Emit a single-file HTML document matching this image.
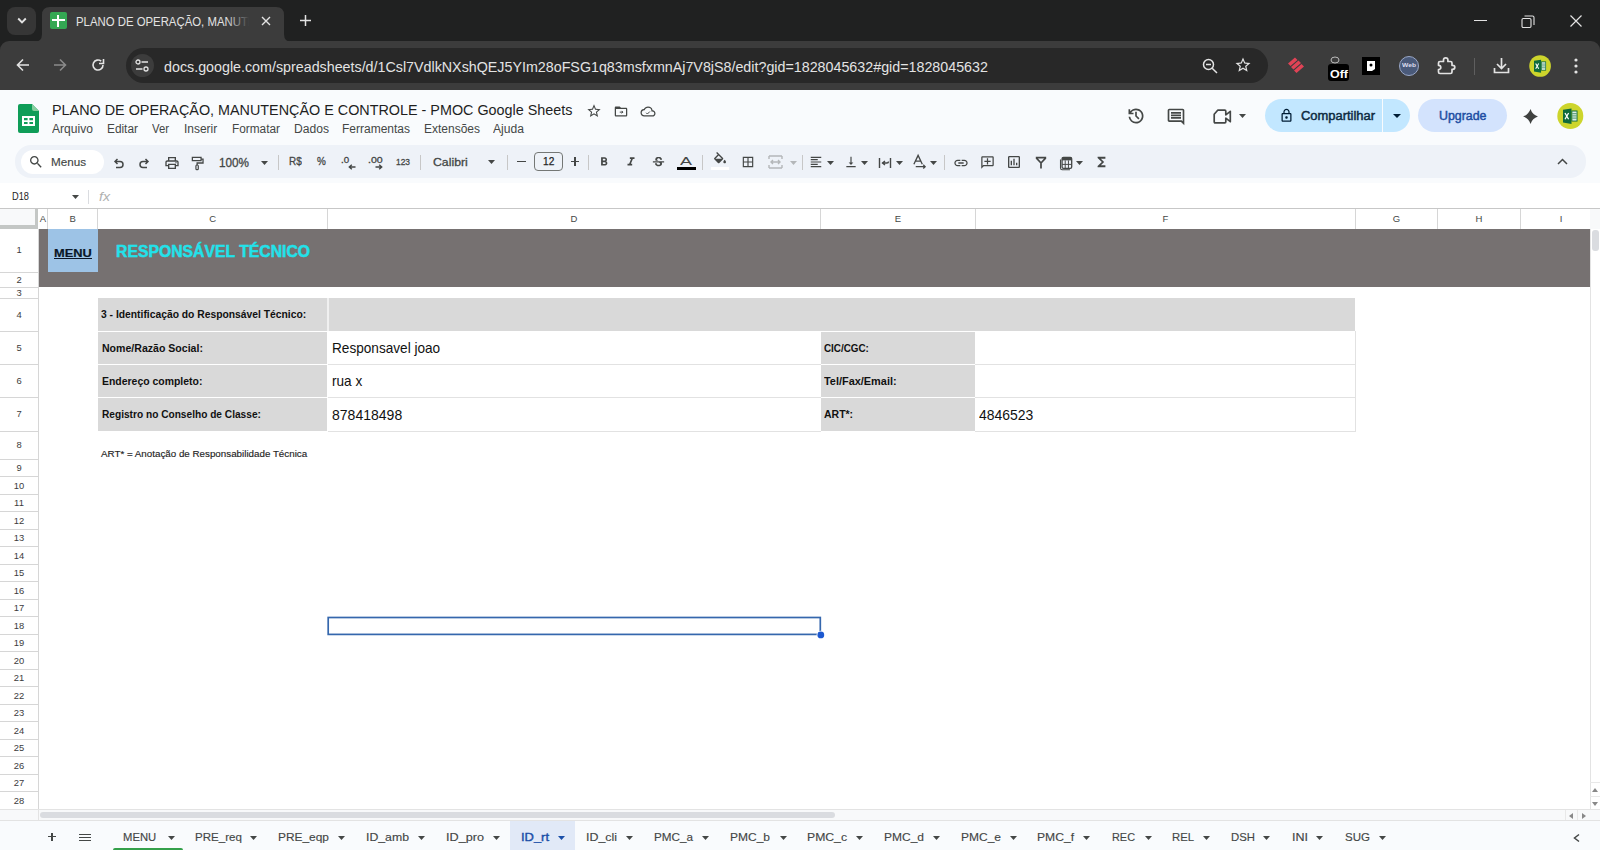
<!DOCTYPE html>
<html><head><meta charset="utf-8"><style>
html,body{margin:0;padding:0;width:1600px;height:850px;overflow:hidden;background:#fff;}
body{position:relative;font-family:"Liberation Sans",sans-serif;}
.t{position:absolute;white-space:pre;line-height:normal;transform-origin:0 0;}
.r{position:absolute;}
.i{position:absolute;overflow:visible;}
</style></head><body>
<div class="r" style="left:0px;top:0px;width:1600px;height:52px;background:#202121;"></div>
<div class="r" style="left:0px;top:41px;width:1600px;height:49px;background:#3c3c3c;border-radius:9px 9px 0 0;"></div>
<div class="r" style="left:7px;top:7px;width:29px;height:28px;background:#363636;border-radius:8px;"></div>
<svg class="i" style="left:17px;top:17px;" width="10" height="8" viewBox="0 0 10 8"><path d="M1.2 1.5L5 5.3L8.8 1.5" fill="none" stroke="#e3e3e3" stroke-width="1.9"/></svg>
<svg class="i" style="left:34px;top:7px" width="260" height="35" viewBox="0 0 260 35"><path d="M0 35 Q8 35 8 27 L8 8 Q8 0 16 0 L242 0 Q250 0 250 8 L250 27 Q250 35 258 35 Z" fill="#3c3c3c"/></svg>
<div class="r" style="left:50px;top:12px;width:17px;height:17px;background:#34a853;border-radius:2px;"></div>
<div class="r" style="left:57px;top:15px;width:2px;height:12px;background:#fff;"></div>
<div class="r" style="left:52px;top:19px;width:13px;height:2px;background:#fff;"></div>
<div class="t" style="left:76.00px;top:14.05px;font-size:13.20px;color:#e3e3e3;transform:scaleX(0.8621);">PLANO DE OPERAÇÃO, MANUTE</div>
<div class="r" style="left:226px;top:10px;width:26px;height:22px;background:linear-gradient(90deg,rgba(60,60,60,0),#3c3c3c 90%);"></div>
<div class="r" style="left:252px;top:10px;width:30px;height:22px;background:#3c3c3c;"></div>
<svg class="i" style="left:261px;top:16px;" width="10" height="10" viewBox="0 0 10 10"><path d="M1 1L9 9M9 1L1 9" stroke="#e3e3e3" stroke-width="1.4"/></svg>
<svg class="i" style="left:300px;top:15px;" width="11" height="11" viewBox="0 0 11 11"><path d="M5.5 0V11M0 5.5H11" stroke="#e3e3e3" stroke-width="1.5"/></svg>
<div class="r" style="left:1474px;top:20px;width:13px;height:1px;background:#e3e3e3;"></div>
<svg class="i" style="left:1521px;top:15px;" width="14" height="13" viewBox="0 0 14 13"><rect x="1" y="3.5" width="9" height="9" rx="1.2" fill="none" stroke="#e3e3e3" stroke-width="1.1"/><path d="M3.5 1H11.5Q13 1 13 2.5V10" fill="none" stroke="#e3e3e3" stroke-width="1.1"/></svg>
<svg class="i" style="left:1570px;top:15px;" width="12" height="12" viewBox="0 0 12 12"><path d="M0.5 0.5L11.5 11.5M11.5 0.5L0.5 11.5" stroke="#e3e3e3" stroke-width="1.2"/></svg>
<svg class="i" style="left:16px;top:58px;" width="14" height="14" viewBox="0 0 14 14"><path d="M13 7H2M7 1.5L1.5 7L7 12.5" fill="none" stroke="#e3e3e3" stroke-width="1.6"/></svg>
<svg class="i" style="left:53px;top:58px;" width="14" height="14" viewBox="0 0 14 14"><path d="M1 7H12M7 1.5L12.5 7L7 12.5" fill="none" stroke="#8a8a8a" stroke-width="1.6"/></svg>
<svg class="i" style="left:91px;top:58px;" width="14" height="14" viewBox="0 0 14 14"><path d="M12 7A5 5 0 1 1 10.2 3.2" fill="none" stroke="#e3e3e3" stroke-width="1.6"/><path d="M12.5 1V5.5H8" fill="none" stroke="#e3e3e3" stroke-width="1.6"/></svg>
<div class="r" style="left:126px;top:48px;width:1142px;height:35px;background:#282828;border-radius:18px;"></div>
<div class="r" style="left:131px;top:54px;width:23px;height:23px;background:#3c3c3c;border-radius:50%;"></div>
<svg class="i" style="left:135px;top:59px;" width="14" height="13" viewBox="0 0 14 13"><circle cx="3" cy="3" r="2" fill="none" stroke="#e3e3e3" stroke-width="1.3"/><path d="M6.5 3H13M1 10H7.5" stroke="#e3e3e3" stroke-width="1.3"/><circle cx="11" cy="10" r="2" fill="none" stroke="#e3e3e3" stroke-width="1.3"/></svg>
<div class="t" style="left:164.00px;top:57.97px;font-size:15.50px;color:#e3e3e3;transform:scaleX(0.9212);">docs.google.com/spreadsheets/d/1Csl7VdlkNXshQEJ5YIm28oFSG1q83msfxmnAj7V8jS8/edit?gid=1828045632#gid=1828045632</div>
<svg class="i" style="left:1202px;top:58px;" width="16" height="16" viewBox="0 0 16 16"><circle cx="6.5" cy="6.5" r="5" fill="none" stroke="#e3e3e3" stroke-width="1.5"/><path d="M10.2 10.2L15 15M4 6.5H9" stroke="#e3e3e3" stroke-width="1.5"/></svg>
<svg class="i" style="left:1234px;top:56px;" width="18" height="18" viewBox="0 0 24 24"><path d="M22 9.24l-7.19-.62L12 2 9.19 8.63 2 9.24l5.46 4.73L5.82 21 12 17.27 18.18 21l-1.63-7.03L22 9.24zM12 15.4l-3.76 2.27 1-4.28-3.32-2.88 4.38-.38L12 6.1l1.71 4.04 4.38.38-3.32 2.88 1 4.28L12 15.4z" fill="#e3e3e3"/></svg>
<svg class="i" style="left:1287px;top:56px;" width="18" height="19" viewBox="0 0 18 19"><path d="M1 7.5L8 1.5L10.5 4L3.5 10Z M4 11L11.5 4.5L14 7L6.5 13.5Z M7 14.5L14.5 8L17 10.5L9.5 17Z" fill="#e04356"/></svg>
<svg class="i" style="left:1330px;top:56px;" width="10" height="8" viewBox="0 0 10 8"><ellipse cx="5" cy="4" rx="4" ry="3" fill="none" stroke="#bbb" stroke-width="1"/></svg>
<div class="r" style="left:1328px;top:64px;width:21px;height:17px;background:#000;border-radius:3px;"></div>
<div class="t" style="left:1330.00px;top:68.05px;font-size:11.00px;color:#fff;font-weight:700;transform:scaleX(1.1333);">Off</div>
<div class="r" style="left:1362px;top:57px;width:18px;height:18px;background:#000;"></div>
<svg class="i" style="left:1366px;top:60px;" width="10" height="12" viewBox="0 0 10 12"><path d="M1 1H9V9L6 11H1Z" fill="#fff"/><circle cx="5" cy="5" r="1.5" fill="#000"/></svg>
<div class="r" style="left:1399px;top:56px;width:20px;height:20px;background:#4a5a7a;border-radius:50%;border:1.5px solid #9aa8c8;box-sizing:border-box;"></div>
<div class="t" style="left:1402.00px;top:61.57px;font-size:6.00px;color:#dde;font-weight:700;transform:scaleX(1.1149);">Web</div>
<svg class="i" style="left:1437px;top:56px;" width="19" height="19" viewBox="0 0 19 19"><path d="M3 5.5H6.5V4Q6.5 1.8 8.7 1.8Q10.9 1.8 10.9 4V5.5H13.5Q15 5.5 15 7V9.3H15.8Q17.8 9.3 17.8 11.3Q17.8 13.3 15.8 13.3H15V16Q15 17.5 13.5 17.5H3Q1.5 17.5 1.5 16V13.5Q3.8 13.5 3.8 11.4Q3.8 9.3 1.5 9.3V7Q1.5 5.5 3 5.5Z" fill="none" stroke="#e3e3e3" stroke-width="1.7" stroke-linejoin="round"/></svg>
<div class="r" style="left:1474px;top:58px;width:1px;height:17px;background:#5f5f5f;"></div>
<svg class="i" style="left:1492px;top:56px;" width="19" height="19" viewBox="0 0 19 19"><path d="M9.5 2V12M5 8L9.5 12.5L14 8M2.5 12V16.5H16.5V12" fill="none" stroke="#e3e3e3" stroke-width="1.7"/></svg>
<svg class="i" style="left:1528.5px;top:55px;" width="22.5" height="22" viewBox="0 0 27 26"><circle cx="13.3" cy="13" r="13" fill="#cdd52c"/><path d="M6 6.8L14.5 5.5V21L6 19.5Z" fill="#0f6b3c"/><path d="M14.5 7.5H20.5V18.5H14.5Z" fill="#0f6b3c"/><path d="M15.3 8.5H19.6V17.6H15.3Z" fill="#dcefe3"/><path d="M15.3 10.7H19.6M15.3 12.9H19.6M15.3 15.1H19.6" stroke="#0f6b3c" stroke-width="0.7"/><path d="M8 10L11.6 16.3M11.6 10L8 16.3" stroke="#fff" stroke-width="1.3"/></svg>
<svg class="i" style="left:1572px;top:57px;" width="8" height="18" viewBox="0 0 8 18"><circle cx="4" cy="3" r="1.6" fill="#e3e3e3"/><circle cx="4" cy="9" r="1.6" fill="#e3e3e3"/><circle cx="4" cy="15" r="1.6" fill="#e3e3e3"/></svg>
<div class="r" style="left:0px;top:90px;width:1600px;height:118px;background:#f9fbfd;"></div>
<svg class="i" style="left:18px;top:104px;" width="21" height="29" viewBox="0 0 21 29"><path d="M2 0H14L21 7V27Q21 29 19 29H2Q0 29 0 27V2Q0 0 2 0Z" fill="#0f9d58"/><path d="M14 0L21 7H16Q14 7 14 5Z" fill="#87ce9f"/><path d="M4 12H17V22H4Z M6 14V16.2H9.6V14Z M11.4 14V16.2H15V14Z M6 18V20H9.6V18Z M11.4 18V20H15V18Z" fill="#fff" fill-rule="evenodd"/></svg>
<div class="t" style="left:51.50px;top:101.22px;font-size:15.00px;color:#1f1f1f;transform:scaleX(0.9577);">PLANO DE OPERAÇÃO, MANUTENÇÃO E CONTROLE - PMOC Google Sheets</div>
<svg class="i" style="left:586px;top:102.5px;" width="16" height="16" viewBox="0 0 24 24"><path d="M22 9.24l-7.19-.62L12 2 9.19 8.63 2 9.24l5.46 4.73L5.82 21 12 17.27 18.18 21l-1.63-7.03L22 9.24zM12 15.4l-3.76 2.27 1-4.28-3.32-2.88 4.38-.38L12 6.1l1.71 4.04 4.38.38-3.32 2.88 1 4.28L12 15.4z" fill="#444746"/></svg>
<svg class="i" style="left:613px;top:103.5px;" width="16" height="15" viewBox="0 0 24 24"><path d="M20 6h-8l-2-2H4c-1.1 0-1.99.9-1.99 2L2 18c0 1.1.9 2 2 2h16c1.1 0 2-.9 2-2V8c0-1.1-.9-2-2-2zm0 12H4V8h16v10z" fill="#444746"/><path d="M10 13h5M13 11l2 2-2 2" stroke="#444746" stroke-width="1.6" fill="none"/></svg>
<svg class="i" style="left:640px;top:103.5px;" width="16" height="15" viewBox="0 0 24 24"><path d="M19.35 10.04A7.49 7.49 0 0 0 12 4C9.11 4 6.6 5.64 5.35 8.04A5.994 5.994 0 0 0 0 14c0 3.31 2.69 6 6 6h13c2.76 0 5-2.24 5-5 0-2.64-2.05-4.78-4.65-4.96zM19 18H6c-2.21 0-4-1.79-4-4s1.79-4 4-4h.71C7.37 7.69 9.48 6 12 6a5.5 5.5 0 0 1 5.5 5.5v.5H19c1.66 0 3 1.34 3 3s-1.34 3-3 3z" fill="#444746"/><path d="M9 14l2 2 4-4" stroke="#444746" stroke-width="1.6" fill="none"/></svg>
<div class="t" style="left:51.90px;top:122.34px;font-size:12.00px;color:#444746;transform:scaleX(1.0052);">Arquivo</div>
<div class="t" style="left:106.60px;top:122.34px;font-size:12.00px;color:#444746;transform:scaleX(0.9857);">Editar</div>
<div class="t" style="left:152.00px;top:122.34px;font-size:12.00px;color:#444746;transform:scaleX(0.9438);">Ver</div>
<div class="t" style="left:183.80px;top:122.34px;font-size:12.00px;color:#444746;transform:scaleX(0.9958);">Inserir</div>
<div class="t" style="left:231.70px;top:122.34px;font-size:12.00px;color:#444746;transform:scaleX(0.9861);">Formatar</div>
<div class="t" style="left:294.00px;top:122.34px;font-size:12.00px;color:#444746;transform:scaleX(1.0090);">Dados</div>
<div class="t" style="left:342.00px;top:122.34px;font-size:12.00px;color:#444746;">Ferramentas</div>
<div class="t" style="left:424.00px;top:122.34px;font-size:12.00px;color:#444746;">Extensões</div>
<div class="t" style="left:493.00px;top:122.34px;font-size:12.00px;color:#444746;transform:scaleX(1.0100);">Ajuda</div>
<svg class="i" style="left:1126px;top:106px;" width="20" height="20" viewBox="0 -960 960 960"><path d="M480-120q-138 0-240.5-91.5T122-440h82q14 104 92.5 172T480-200q117 0 198.5-81.5T760-480q0-117-81.5-198.5T480-760q-69 0-129 32t-101 88h110v80H120v-240h80v94q51-64 124.5-99T480-840q75 0 140.5 28.5t114 77q48.5 48.5 77 114T840-480q0 75-28.5 140.5t-77 114q-48.5 48.5-114 77T480-120Zm112-192L440-464v-216h80v184l128 128-56 56Z" fill="#444746"/></svg>
<svg class="i" style="left:1166px;top:107px;" width="20" height="20" viewBox="0 0 24 24"><path d="M21.99 4c0-1.1-.89-2-1.99-2H4c-1.1 0-2 .9-2 2v12c0 1.1.9 2 2 2h14l4 4-.01-18zM20 4v13.17L18.83 16H4V4h16zM6 12h12v2H6zm0-3h12v2H6zm0-3h12v2H6z" fill="#444746"/></svg>
<svg class="i" style="left:1213px;top:109px;" width="19" height="15" viewBox="0 0 19 15"><path d="M1.2 5.2L4.7 1.2H11.8Q12.8 1.2 12.8 2.2V5.8L17.3 2.3V12.7L12.8 9.2V12.8Q12.8 13.8 11.8 13.8H2.2Q1.2 13.8 1.2 12.8Z" fill="none" stroke="#444746" stroke-width="1.7" stroke-linejoin="round"/></svg>
<svg class="i" style="left:1239px;top:114px;" width="7" height="4" viewBox="0 0 7 4"><path d="M0 0L3.5 4L7 0Z" fill="#444746"/></svg>
<div class="r" style="left:1265px;top:99px;width:145px;height:33px;background:#c2e7ff;border-radius:17px;"></div>
<div class="r" style="left:1382px;top:99px;width:1px;height:33px;background:#f9fbfd;"></div>
<svg class="i" style="left:1279px;top:107px;" width="15" height="17" viewBox="0 0 24 24"><path d="M18 8h-1V6c0-2.76-2.24-5-5-5S7 3.24 7 6v2H6c-1.1 0-2 .9-2 2v10c0 1.1.9 2 2 2h12c1.1 0 2-.9 2-2V10c0-1.1-.9-2-2-2zM9 6c0-1.66 1.34-3 3-3s3 1.34 3 3v2H9V6zm9 14H6V10h12v10zm-6-3c1.1 0 2-.9 2-2s-.9-2-2-2-2 .9-2 2 .9 2 2 2z" fill="#001d35"/></svg>
<div class="t" style="left:1301.00px;top:108.77px;font-size:12.30px;color:#0d2a3f;transform:scaleX(1.0510);-webkit-text-stroke:0.45px #0d2a3f;">Compartilhar</div>
<svg class="i" style="left:1393px;top:114px;" width="8" height="5" viewBox="0 0 8 5"><path d="M0 0L4 4L8 0Z" fill="#001d35"/></svg>
<div class="r" style="left:1418px;top:99px;width:89px;height:33px;background:#d3e3fd;border-radius:17px;"></div>
<div class="t" style="left:1438.50px;top:108.77px;font-size:12.30px;color:#1d4ea3;transform:scaleX(1.0067);-webkit-text-stroke:0.45px #1d4ea3;">Upgrade</div>
<svg class="i" style="left:1521.5px;top:107.5px;" width="17" height="17" viewBox="0 0 24 24"><path d="M12 1.5Q14.6 9.4 22.5 12Q14.6 14.6 12 22.5Q9.4 14.6 1.5 12Q9.4 9.4 12 1.5Z" fill="#3f4140"/></svg>
<svg class="i" style="left:1556.5px;top:102.5px;" width="27" height="26" viewBox="0 0 27 26"><circle cx="13.3" cy="13" r="13" fill="#cdd52c"/><path d="M6 6.8L14.5 5.5V21L6 19.5Z" fill="#0f6b3c"/><path d="M14.5 7.5H20.5V18.5H14.5Z" fill="#0f6b3c"/><path d="M15.3 8.5H19.6V17.6H15.3Z" fill="#dcefe3"/><path d="M15.3 10.7H19.6M15.3 12.9H19.6M15.3 15.1H19.6" stroke="#0f6b3c" stroke-width="0.7"/><path d="M8 10L11.6 16.3M11.6 10L8 16.3" stroke="#fff" stroke-width="1.3"/></svg>
<div class="r" style="left:14.5px;top:145px;width:1571.0px;height:32.5px;background:#eef2f8;border-radius:16px;"></div>
<div class="r" style="left:21px;top:150px;width:82.5px;height:23.5px;background:#ffffff;border-radius:12px;"></div>
<svg class="i" style="left:27.5px;top:154px;" width="16" height="16" viewBox="0 0 24 24"><path d="M15.5 14h-.79l-.28-.27C15.41 12.59 16 11.11 16 9.5 16 5.91 13.09 3 9.5 3S3 5.91 3 9.5 5.91 16 9.5 16c1.61 0 3.09-.59 4.23-1.57l.27.28v.79l5 4.99L20.49 19l-4.99-5zm-6 0C7.01 14 5 11.99 5 9.5S7.01 5 9.5 5 14 7.01 14 9.5 11.99 14 9.5 14z" fill="#444746"/></svg>
<div class="t" style="left:51.00px;top:154.72px;font-size:11.80px;color:#444746;transform:scaleX(0.9910);-webkit-text-stroke:0.15px #444746;">Menus</div>
<svg class="i" style="left:112px;top:157px;" width="12" height="12" viewBox="0 0 12 12"><path d="M3.5 4.5H8Q11 4.5 11 7.5Q11 10.5 8 10.5H4M5.5 2L3 4.5L5.5 7" fill="none" stroke="#444746" stroke-width="1.5"/></svg>
<svg class="i" style="left:139px;top:157px;" width="12" height="12" viewBox="0 0 12 12"><path d="M8.5 4.5H4Q1 4.5 1 7.5Q1 10.5 4 10.5H8M6.5 2L9 4.5L6.5 7" fill="none" stroke="#444746" stroke-width="1.5"/></svg>
<svg class="i" style="left:164px;top:155px;" width="16" height="16" viewBox="0 0 24 24"><path d="M19 8h-1V3H6v5H5c-1.66 0-3 1.34-3 3v6h4v4h12v-4h4v-6c0-1.66-1.34-3-3-3zM8 5h8v3H8V5zm8 14H8v-4h8v4zm4-4h-2v-2H6v2H4v-4c0-.55.45-1 1-1h14c.55 0 1 .45 1 1v4z" fill="#444746"/><circle cx="18" cy="11.5" r="1" fill="#444746"/></svg>
<svg class="i" style="left:190px;top:155px;" width="15" height="16" viewBox="0 0 19 19"><path d="M3 2.5H14V6.5H3Z M14 4.5H16.5V9.5H9V12" fill="none" stroke="#444746" stroke-width="1.6"/><rect x="7.5" y="12" width="3" height="6" rx="1.2" fill="none" stroke="#444746" stroke-width="1.5"/></svg>
<div class="t" style="left:219.00px;top:155.74px;font-size:12.00px;color:#444746;transform:scaleX(0.9775);-webkit-text-stroke:0.3px #444746;">100%</div>
<svg class="i" style="left:261px;top:161px;" width="7" height="4" viewBox="0 0 7 4"><path d="M0 0L3.5 4L7 0Z" fill="#444746"/></svg>
<div class="r" style="left:278px;top:155px;width:1px;height:15px;background:#c7c7c7;"></div>
<div class="t" style="left:288.70px;top:154.83px;font-size:10.80px;color:#444746;transform:scaleX(0.9199);-webkit-text-stroke:0.3px #444746;">R$</div>
<div class="t" style="left:317.20px;top:154.83px;font-size:10.80px;color:#444746;transform:scaleX(0.9164);-webkit-text-stroke:0.3px #444746;">%</div>
<div class="t" style="left:341.20px;top:154.21px;font-size:9.60px;color:#444746;transform:scaleX(1.0117);-webkit-text-stroke:0.3px #444746;">.0</div>
<svg class="i" style="left:348px;top:164px;" width="8" height="6" viewBox="0 0 8 6"><path d="M7.5 3H1.5M3.8 0.8L1.3 3L3.8 5.2" fill="none" stroke="#444746" stroke-width="1.4"/></svg>
<div class="t" style="left:367.50px;top:154.21px;font-size:9.60px;color:#444746;transform:scaleX(1.1015);-webkit-text-stroke:0.3px #444746;">.00</div>
<svg class="i" style="left:374.5px;top:164px;" width="8" height="6" viewBox="0 0 8 6"><path d="M0.5 3H6.5M4.2 0.8L6.7 3L4.2 5.2" fill="none" stroke="#444746" stroke-width="1.4"/></svg>
<div class="t" style="left:395.50px;top:155.91px;font-size:9.60px;color:#444746;transform:scaleX(0.8740);-webkit-text-stroke:0.3px #444746;">123</div>
<div class="r" style="left:420px;top:155px;width:1px;height:15px;background:#c7c7c7;"></div>
<div class="t" style="left:433.00px;top:155.20px;font-size:11.60px;color:#444746;transform:scaleX(1.0585);-webkit-text-stroke:0.3px #444746;">Calibri</div>
<svg class="i" style="left:488px;top:160px;" width="7" height="4" viewBox="0 0 7 4"><path d="M0 0L3.5 4L7 0Z" fill="#444746"/></svg>
<div class="r" style="left:507px;top:155px;width:1px;height:15px;background:#c7c7c7;"></div>
<div class="r" style="left:517.3px;top:161.1px;width:8.400000000000091px;height:1.3000000000000114px;background:#444746;"></div>
<div class="r" style="left:534.2px;top:151.6px;width:28.799999999999955px;height:19.80000000000001px;background:transparent;border:1.3px solid #747775;border-radius:4px;box-sizing:border-box;"></div>
<div class="t" style="left:542.60px;top:155.38px;font-size:11.40px;color:#1f1f1f;transform:scaleX(0.8911);-webkit-text-stroke:0.25px #1f1f1f;">12</div>
<div class="r" style="left:570.7px;top:161.1px;width:8.5px;height:1.3000000000000114px;background:#444746;"></div>
<div class="r" style="left:574.3px;top:157.2px;width:1.3000000000000682px;height:9.200000000000017px;background:#444746;"></div>
<div class="r" style="left:588px;top:155px;width:1px;height:15px;background:#c7c7c7;"></div>
<svg class="i" style="left:597px;top:155px;" width="14" height="14" viewBox="0 0 24 24"><path d="M15.6 10.79c.97-.67 1.65-1.77 1.65-2.79 0-2.26-1.75-4-4-4H7v14h7.04c2.09 0 3.71-1.7 3.71-3.79 0-1.52-.86-2.82-2.15-3.42zM10 6.5h3c.83 0 1.5.67 1.5 1.5s-.67 1.5-1.5 1.5h-3v-3zm3.5 9H10v-3h3.5c.83 0 1.5.67 1.5 1.5s-.67 1.5-1.5 1.5z" fill="#444746"/></svg>
<svg class="i" style="left:624px;top:155px;" width="14" height="14" viewBox="0 0 24 24"><path d="M10 4v3h2.21l-3.42 8H6v3h8v-3h-2.21l3.42-8H18V4z" fill="#444746"/></svg>
<svg class="i" style="left:651px;top:155px;" width="15" height="15" viewBox="0 0 24 24"><path d="M7.24 8.75c-.26-.48-.39-1.03-.39-1.67 0-.61.13-1.16.4-1.67.26-.5.63-.93 1.11-1.29.48-.35 1.05-.63 1.7-.83.66-.19 1.39-.29 2.18-.29.81 0 1.54.11 2.21.34.66.22 1.23.54 1.69.94.47.4.83.88 1.08 1.43s.38 1.15.38 1.81h-3.01c0-.31-.05-.59-.15-.85-.09-.27-.24-.49-.44-.68-.2-.19-.45-.33-.75-.44-.3-.1-.66-.16-1.06-.16-.39 0-.74.04-1.03.13s-.53.21-.72.36c-.19.16-.34.34-.44.55-.1.21-.15.43-.15.66 0 .48.25.88.74 1.21.38.25.77.48 1.41.7H7.39c-.05-.08-.11-.17-.15-.25zM21 12v-2H3v2h9.62c.18.07.4.14.55.2.37.17.66.34.87.51s.35.36.43.57c.07.2.11.43.11.69 0 .23-.05.45-.14.66-.09.2-.23.38-.42.53-.19.15-.42.26-.71.35-.29.08-.63.13-1.01.13-.43 0-.83-.04-1.18-.13s-.66-.23-.91-.42c-.25-.19-.45-.44-.59-.75s-.25-.76-.25-1.21H6.4c0 .55.08 1.13.24 1.58s.37.85.65 1.21c.28.35.6.66.98.92.37.26.78.48 1.22.65.44.17.9.3 1.38.39.48.08.96.13 1.44.13.8 0 1.53-.09 2.18-.28s1.21-.45 1.67-.79c.46-.34.82-.77 1.07-1.27s.38-1.07.38-1.71c0-.6-.1-1.14-.31-1.61-.05-.11-.11-.23-.17-.33H21z" fill="#444746"/></svg>
<div class="t" style="left:680.00px;top:154.59px;font-size:11.50px;color:#444746;transform:scaleX(1.5644);">A</div>
<div class="r" style="left:677px;top:167px;width:19px;height:3px;background:#000;"></div>
<div class="r" style="left:702px;top:155px;width:1px;height:15px;background:#c7c7c7;"></div>
<svg class="i" style="left:712px;top:152px;" width="16" height="16" viewBox="0 0 24 24"><path d="M16.56 8.94L7.62 0 6.21 1.41l2.38 2.38-5.15 5.15c-.59.59-.59 1.54 0 2.12l5.5 5.5c.29.29.68.44 1.06.44s.77-.15 1.06-.44l5.5-5.5c.59-.58.59-1.53 0-2.12zM5.21 10L10 5.21 14.79 10H5.21zM19 11.5s-2 2.17-2 3.5c0 1.1.9 2 2 2s2-.9 2-2c0-1.33-2-3.5-2-3.5z" fill="#444746"/></svg>
<div class="r" style="left:711px;top:167px;width:18px;height:3px;background:#ffffff;"></div>
<svg class="i" style="left:741px;top:155px;" width="14" height="14" viewBox="0 0 24 24"><path d="M3 3v18h18V3H3zm8 16H5v-6h6v6zm0-8H5V5h6v6zm8 8h-6v-6h6v6zm0-8h-6V5h6v6z" fill="#444746"/></svg>
<svg class="i" style="left:768px;top:155px;" width="15" height="14" viewBox="0 0 15 14"><path d="M1 1H14M1 13H14M1 1V4M14 1V4M1 10V13M14 10V13M3 7H12M5 5L3 7L5 9M10 5L12 7L10 9" fill="none" stroke="#b4b7b9" stroke-width="1.4"/></svg>
<svg class="i" style="left:790px;top:161px;" width="7" height="4" viewBox="0 0 7 4"><path d="M0 0L3.5 4L7 0Z" fill="#b4b7b9"/></svg>
<div class="r" style="left:802px;top:155px;width:1px;height:15px;background:#c7c7c7;"></div>
<svg class="i" style="left:809px;top:155px;" width="14" height="14" viewBox="0 0 24 24"><path d="M15 15H3v2h12v-2zm0-8H3v2h12V7zM3 13h18v-2H3v2zm0 8h18v-2H3v2zM3 3v2h18V3H3z" fill="#444746"/></svg>
<svg class="i" style="left:827px;top:161px;" width="7" height="4" viewBox="0 0 7 4"><path d="M0 0L3.5 4L7 0Z" fill="#444746"/></svg>
<svg class="i" style="left:844px;top:155px;" width="14" height="14" viewBox="0 0 24 24"><path d="M16 13h-3V3h-2v10H8l4 4 4-4zM4 19v2h16v-2H4z" fill="#444746"/></svg>
<svg class="i" style="left:861px;top:161px;" width="7" height="4" viewBox="0 0 7 4"><path d="M0 0L3.5 4L7 0Z" fill="#444746"/></svg>
<svg class="i" style="left:878px;top:155px;" width="14" height="14" viewBox="0 0 14 14"><path d="M1.5 3V13M12.5 3V13M4 8H9Q10.5 8 10.5 6.5M7 6L4.5 8L7 10" fill="none" stroke="#444746" stroke-width="1.4"/></svg>
<svg class="i" style="left:896px;top:161px;" width="7" height="4" viewBox="0 0 7 4"><path d="M0 0L3.5 4L7 0Z" fill="#444746"/></svg>
<svg class="i" style="left:912px;top:154px;" width="15" height="15" viewBox="0 0 16 16"><path d="M2 11L6.5 1.5L11 11M3.7 7.5H9.3M4 13.5H14M12 11.5L14 13.5L12 15.5" fill="none" stroke="#444746" stroke-width="1.4"/></svg>
<svg class="i" style="left:930px;top:161px;" width="7" height="4" viewBox="0 0 7 4"><path d="M0 0L3.5 4L7 0Z" fill="#444746"/></svg>
<div class="r" style="left:944px;top:155px;width:1px;height:15px;background:#c7c7c7;"></div>
<svg class="i" style="left:953px;top:155px;" width="16" height="16" viewBox="0 0 24 24"><path d="M3.9 12c0-1.71 1.39-3.1 3.1-3.1h4V7H7c-2.76 0-5 2.24-5 5s2.24 5 5 5h4v-1.9H7c-1.71 0-3.1-1.39-3.1-3.1zM8 13h8v-2H8v2zm9-6h-4v1.9h4c1.71 0 3.1 1.39 3.1 3.1s-1.39 3.1-3.1 3.1h-4V17h4c2.76 0 5-2.24 5-5s-2.24-5-5-5z" fill="#444746"/></svg>
<svg class="i" style="left:980px;top:155px;" width="15" height="15" viewBox="0 0 24 24"><g transform="translate(24 0) scale(-1 1)"><path d="M22 4c0-1.1-.9-2-2-2H4c-1.1 0-2 .9-2 2v12c0 1.1.9 2 2 2h14l4 4V4zm-2 13.17L18.83 16H4V4h16v13.17zM13 5h-2v4H7v2h4v4h2v-4h4V9h-4z" fill="#444746"/></g></svg>
<svg class="i" style="left:1006px;top:154px;" width="16" height="16" viewBox="0 0 24 24"><path d="M19 3H5c-1.1 0-2 .9-2 2v14c0 1.1.9 2 2 2h14c1.1 0 2-.9 2-2V5c0-1.1-.9-2-2-2zm0 16H5V5h14v14zM7 10h2v7H7zm4-3h2v10h-2zm4 6h2v4h-2z" fill="#444746"/></svg>
<svg class="i" style="left:1034.5px;top:156px;" width="12" height="13" viewBox="0 0 12 13"><path d="M0.8 1.6H11.2M1.2 1.8L6 7V12.6M10.8 1.8L6 7" fill="none" stroke="#444746" stroke-width="1.7"/></svg>
<svg class="i" style="left:1058.5px;top:155.5px;" width="14" height="14" viewBox="0 0 15 16"><path d="M3 3.2Q3 1.6 4.6 1.6H12.4Q14 1.6 14 3.2V12.6Q14 14.2 12.4 14.2H4.6Q3 14.2 3 12.6Z" fill="none" stroke="#444746" stroke-width="1.5"/><path d="M3 1.8H14V5H3Z" fill="#444746"/><path d="M6.6 5V14M10.3 5V14M3 9.6H14" stroke="#444746" stroke-width="1.1"/><path d="M1.2 4V13.6Q1.2 15.6 3.2 15.6H12" fill="none" stroke="#444746" stroke-width="1.2"/></svg>
<svg class="i" style="left:1076px;top:161px;" width="7" height="4" viewBox="0 0 7 4"><path d="M0 0L3.5 4L7 0Z" fill="#444746"/></svg>
<svg class="i" style="left:1095px;top:154px;" width="13" height="16" viewBox="2 2 20 20"><path d="M18 4H6v2l6.5 6L6 18v2h12v-3h-7l5-5-5-5h7z" fill="#444746"/></svg>
<svg class="i" style="left:1557px;top:158px;" width="11" height="7" viewBox="0 0 11 7"><path d="M1 6L5.5 1.5L10 6" fill="none" stroke="#444746" stroke-width="1.5"/></svg>
<div class="r" style="left:0px;top:183px;width:1600px;height:25px;background:#ffffff;"></div>
<div class="t" style="left:12.00px;top:189.86px;font-size:11.20px;color:#1f1f1f;transform:scaleX(0.8274);">D18</div>
<svg class="i" style="left:72px;top:195px;" width="7" height="4" viewBox="0 0 7 4"><path d="M0 0L3.5 4L7 0Z" fill="#444746"/></svg>
<div class="r" style="left:88px;top:190px;width:1px;height:14px;background:#dadce0;"></div>
<div class="t" style="left:99.00px;top:190.19px;font-size:12.50px;color:#b0b0b0;transform:scaleX(1.1314);font-style:italic;font-family:"Liberation Serif",serif;">fx</div>
<div class="r" style="left:0px;top:208px;width:1600px;height:1px;background:#c7c7c7;"></div>
<div class="r" style="left:0px;top:209px;width:1600px;height:19.5px;background:#ffffff;"></div>
<div class="r" style="left:0px;top:209px;width:35px;height:16px;background:#f8f9fa;"></div>
<div class="r" style="left:35px;top:209px;width:3px;height:19.5px;background:#c4c7c5;"></div>
<div class="r" style="left:0px;top:225px;width:38px;height:3.5px;background:#c4c7c5;"></div>
<div class="t" style="left:39.63px;top:212.90px;font-size:9.50px;color:#444746;">A</div>
<div class="r" style="left:47.1px;top:209px;width:1.0px;height:19.5px;background:#d6d6d6;"></div>
<div class="t" style="left:69.43px;top:212.90px;font-size:9.50px;color:#444746;">B</div>
<div class="r" style="left:97.1px;top:209px;width:1.0px;height:19.5px;background:#d6d6d6;"></div>
<div class="t" style="left:209.22px;top:212.90px;font-size:9.50px;color:#444746;">C</div>
<div class="r" style="left:327.2px;top:209px;width:1.0px;height:19.5px;background:#d6d6d6;"></div>
<div class="t" style="left:570.62px;top:212.90px;font-size:9.50px;color:#444746;">D</div>
<div class="r" style="left:819.9px;top:209px;width:1.0px;height:19.5px;background:#d6d6d6;"></div>
<div class="t" style="left:894.73px;top:212.90px;font-size:9.50px;color:#444746;">E</div>
<div class="r" style="left:974.9px;top:209px;width:1.0px;height:19.5px;background:#d6d6d6;"></div>
<div class="t" style="left:1162.50px;top:212.90px;font-size:9.50px;color:#444746;">F</div>
<div class="r" style="left:1354.9px;top:209px;width:1.0px;height:19.5px;background:#d6d6d6;"></div>
<div class="t" style="left:1392.76px;top:212.90px;font-size:9.50px;color:#444746;">G</div>
<div class="r" style="left:1437.0px;top:209px;width:1.0px;height:19.5px;background:#d6d6d6;"></div>
<div class="t" style="left:1475.52px;top:212.90px;font-size:9.50px;color:#444746;">H</div>
<div class="r" style="left:1519.9px;top:209px;width:1.0px;height:19.5px;background:#d6d6d6;"></div>
<div class="t" style="left:1559.68px;top:212.90px;font-size:9.50px;color:#444746;">I</div>
<div class="r" style="left:1590.2px;top:209px;width:9.799999999999955px;height:19.5px;background:#f8f9fa;"></div>
<div class="r" style="left:0px;top:228.5px;width:37.5px;height:580.9px;background:#ffffff;"></div>
<div class="r" style="left:37.5px;top:228.5px;width:1.0px;height:592.0px;background:#d6d6d6;"></div>
<div class="r" style="left:0px;top:271.5px;width:37.5px;height:1.0px;background:#d6d6d6;"></div>
<div class="t" style="left:16.39px;top:244.34px;font-size:9.40px;color:#3c3c3c;">1</div>
<div class="r" style="left:0px;top:286.5px;width:37.5px;height:1.0px;background:#d6d6d6;"></div>
<div class="t" style="left:16.39px;top:273.59px;font-size:9.40px;color:#3c3c3c;">2</div>
<div class="r" style="left:0px;top:297.5px;width:37.5px;height:1.0px;background:#d6d6d6;"></div>
<div class="t" style="left:16.39px;top:286.59px;font-size:9.40px;color:#3c3c3c;">3</div>
<div class="r" style="left:0px;top:330.5px;width:37.5px;height:1.0px;background:#d6d6d6;"></div>
<div class="t" style="left:16.39px;top:308.59px;font-size:9.40px;color:#3c3c3c;">4</div>
<div class="r" style="left:0px;top:364.0px;width:37.5px;height:1.0px;background:#d6d6d6;"></div>
<div class="t" style="left:16.39px;top:341.84px;font-size:9.40px;color:#3c3c3c;">5</div>
<div class="r" style="left:0px;top:397.0px;width:37.5px;height:1.0px;background:#d6d6d6;"></div>
<div class="t" style="left:16.39px;top:375.09px;font-size:9.40px;color:#3c3c3c;">6</div>
<div class="r" style="left:0px;top:430.5px;width:37.5px;height:1.0px;background:#d6d6d6;"></div>
<div class="t" style="left:16.39px;top:408.34px;font-size:9.40px;color:#3c3c3c;">7</div>
<div class="r" style="left:0px;top:458.8px;width:37.5px;height:1.0px;background:#d6d6d6;"></div>
<div class="t" style="left:16.39px;top:439.24px;font-size:9.40px;color:#3c3c3c;">8</div>
<div class="r" style="left:0px;top:476.3px;width:37.5px;height:1.0px;background:#d6d6d6;"></div>
<div class="t" style="left:16.39px;top:462.14px;font-size:9.40px;color:#3c3c3c;">9</div>
<div class="r" style="left:0px;top:493.8px;width:37.5px;height:1.0px;background:#d6d6d6;"></div>
<div class="t" style="left:13.77px;top:479.64px;font-size:9.40px;color:#3c3c3c;">10</div>
<div class="r" style="left:0px;top:511.3px;width:37.5px;height:0.9999999999999432px;background:#d6d6d6;"></div>
<div class="t" style="left:14.12px;top:497.14px;font-size:9.40px;color:#3c3c3c;">11</div>
<div class="r" style="left:0px;top:528.8px;width:37.5px;height:1.0px;background:#d6d6d6;"></div>
<div class="t" style="left:13.77px;top:514.64px;font-size:9.40px;color:#3c3c3c;">12</div>
<div class="r" style="left:0px;top:546.3px;width:37.5px;height:1.0px;background:#d6d6d6;"></div>
<div class="t" style="left:13.77px;top:532.14px;font-size:9.40px;color:#3c3c3c;">13</div>
<div class="r" style="left:0px;top:563.8px;width:37.5px;height:1.0px;background:#d6d6d6;"></div>
<div class="t" style="left:13.77px;top:549.64px;font-size:9.40px;color:#3c3c3c;">14</div>
<div class="r" style="left:0px;top:581.3px;width:37.5px;height:1.0px;background:#d6d6d6;"></div>
<div class="t" style="left:13.77px;top:567.14px;font-size:9.40px;color:#3c3c3c;">15</div>
<div class="r" style="left:0px;top:598.8px;width:37.5px;height:1.0px;background:#d6d6d6;"></div>
<div class="t" style="left:13.77px;top:584.64px;font-size:9.40px;color:#3c3c3c;">16</div>
<div class="r" style="left:0px;top:616.3px;width:37.5px;height:1.0px;background:#d6d6d6;"></div>
<div class="t" style="left:13.77px;top:602.14px;font-size:9.40px;color:#3c3c3c;">17</div>
<div class="r" style="left:0px;top:633.8px;width:37.5px;height:1.0px;background:#d6d6d6;"></div>
<div class="t" style="left:13.77px;top:619.64px;font-size:9.40px;color:#3c3c3c;">18</div>
<div class="r" style="left:0px;top:651.3px;width:37.5px;height:1.0px;background:#d6d6d6;"></div>
<div class="t" style="left:13.77px;top:637.14px;font-size:9.40px;color:#3c3c3c;">19</div>
<div class="r" style="left:0px;top:668.8px;width:37.5px;height:1.0px;background:#d6d6d6;"></div>
<div class="t" style="left:13.77px;top:654.64px;font-size:9.40px;color:#3c3c3c;">20</div>
<div class="r" style="left:0px;top:686.3px;width:37.5px;height:1.0px;background:#d6d6d6;"></div>
<div class="t" style="left:13.77px;top:672.14px;font-size:9.40px;color:#3c3c3c;">21</div>
<div class="r" style="left:0px;top:703.8px;width:37.5px;height:1.0px;background:#d6d6d6;"></div>
<div class="t" style="left:13.77px;top:689.64px;font-size:9.40px;color:#3c3c3c;">22</div>
<div class="r" style="left:0px;top:721.3px;width:37.5px;height:1.0px;background:#d6d6d6;"></div>
<div class="t" style="left:13.77px;top:707.14px;font-size:9.40px;color:#3c3c3c;">23</div>
<div class="r" style="left:0px;top:738.8px;width:37.5px;height:1.0px;background:#d6d6d6;"></div>
<div class="t" style="left:13.77px;top:724.64px;font-size:9.40px;color:#3c3c3c;">24</div>
<div class="r" style="left:0px;top:756.3px;width:37.5px;height:1.0px;background:#d6d6d6;"></div>
<div class="t" style="left:13.77px;top:742.14px;font-size:9.40px;color:#3c3c3c;">25</div>
<div class="r" style="left:0px;top:773.8px;width:37.5px;height:1.0px;background:#d6d6d6;"></div>
<div class="t" style="left:13.77px;top:759.64px;font-size:9.40px;color:#3c3c3c;">26</div>
<div class="r" style="left:0px;top:791.3px;width:37.5px;height:1.0px;background:#d6d6d6;"></div>
<div class="t" style="left:13.77px;top:777.14px;font-size:9.40px;color:#3c3c3c;">27</div>
<div class="r" style="left:0px;top:808.8px;width:37.5px;height:1.0px;background:#d6d6d6;"></div>
<div class="t" style="left:13.77px;top:794.64px;font-size:9.40px;color:#3c3c3c;">28</div>
<div class="r" style="left:38.5px;top:228.5px;width:1551.7px;height:58.5px;background:#767171;"></div>
<div class="r" style="left:48px;top:229px;width:49.599999999999994px;height:42.80000000000001px;background:#9dc3e6;"></div>
<div class="t" style="left:54.10px;top:245.70px;font-size:11.60px;color:#0a1628;font-weight:700;transform:scaleX(1.1067);-webkit-text-stroke:0.2px #0a1628;">MENU</div>
<div class="r" style="left:53.8px;top:257.6px;width:38.2px;height:1.2999999999999545px;background:#0a1628;"></div>
<div class="t" style="left:115.90px;top:241.43px;font-size:17.20px;color:#22e2ea;font-weight:700;transform:scaleX(0.9167);-webkit-text-stroke:0.5px #22e2ea;">RESPONSÁVEL TÉCNICO</div>
<div class="r" style="left:1590.2px;top:228.5px;width:9.799999999999955px;height:580.9px;background:#ffffff;"></div>
<div class="r" style="left:1590px;top:228.5px;width:1px;height:580.9px;background:#e3e3e3;"></div>
<div class="r" style="left:1592px;top:230px;width:6.5px;height:21px;background:#dadce0;border-radius:3px;"></div>
<div class="r" style="left:98px;top:298px;width:1257px;height:33px;background:#d9d9d9;"></div>
<div class="r" style="left:327px;top:298px;width:1.5px;height:33px;background:#f0f0f0;"></div>
<div class="r" style="left:98px;top:331.5px;width:229px;height:32.5px;background:#d9d9d9;"></div>
<div class="r" style="left:821px;top:331.5px;width:153.60000000000002px;height:32.5px;background:#d9d9d9;"></div>
<div class="r" style="left:98px;top:365px;width:229px;height:32px;background:#d9d9d9;"></div>
<div class="r" style="left:821px;top:365px;width:153.60000000000002px;height:32px;background:#d9d9d9;"></div>
<div class="r" style="left:98px;top:398px;width:229px;height:32.5px;background:#d9d9d9;"></div>
<div class="r" style="left:821px;top:398px;width:153.60000000000002px;height:32.5px;background:#d9d9d9;"></div>
<div class="r" style="left:327.5px;top:364.0px;width:493.5px;height:1.0px;background:#e2e2e2;"></div>
<div class="r" style="left:974.6px;top:364.0px;width:380.9px;height:1.0px;background:#e2e2e2;"></div>
<div class="r" style="left:327.5px;top:397.0px;width:493.5px;height:1.0px;background:#e2e2e2;"></div>
<div class="r" style="left:974.6px;top:397.0px;width:380.9px;height:1.0px;background:#e2e2e2;"></div>
<div class="r" style="left:327.5px;top:430.5px;width:493.5px;height:1.0px;background:#e2e2e2;"></div>
<div class="r" style="left:974.6px;top:430.5px;width:380.9px;height:1.0px;background:#e2e2e2;"></div>
<div class="r" style="left:1355px;top:331px;width:1px;height:100.5px;background:#e2e2e2;"></div>
<div class="t" style="left:101.30px;top:308.35px;font-size:11.00px;color:#111;font-weight:700;transform:scaleX(0.9377);">3 - Identificação do Responsável Técnico:</div>
<div class="t" style="left:101.50px;top:341.65px;font-size:11.00px;color:#111;font-weight:700;transform:scaleX(0.9597);">Nome/Razão Social:</div>
<div class="t" style="left:101.50px;top:374.85px;font-size:11.00px;color:#111;font-weight:700;transform:scaleX(0.9495);">Endereço completo:</div>
<div class="t" style="left:101.50px;top:408.05px;font-size:11.00px;color:#111;font-weight:700;transform:scaleX(0.9219);">Registro no Conselho de Classe:</div>
<div class="t" style="left:823.60px;top:342.05px;font-size:11.00px;color:#111;font-weight:700;transform:scaleX(0.8961);">CIC/CGC:</div>
<div class="t" style="left:823.60px;top:375.25px;font-size:11.00px;color:#111;font-weight:700;transform:scaleX(0.9924);">Tel/Fax/Email:</div>
<div class="t" style="left:823.60px;top:408.44px;font-size:11.00px;color:#111;font-weight:700;transform:scaleX(0.9525);">ART*:</div>
<div class="t" style="left:331.80px;top:339.96px;font-size:14.30px;color:#111;transform:scaleX(0.9518);">Responsavel joao</div>
<div class="t" style="left:331.80px;top:373.46px;font-size:14.30px;color:#111;transform:scaleX(0.9499);">rua x</div>
<div class="t" style="left:331.80px;top:406.66px;font-size:14.30px;color:#111;transform:scaleX(0.9807);">878418498</div>
<div class="t" style="left:978.90px;top:406.86px;font-size:14.30px;color:#111;transform:scaleX(0.9753);">4846523</div>
<div class="t" style="left:101.00px;top:447.84px;font-size:9.90px;color:#1e1e1e;transform:scaleX(0.9913);-webkit-text-stroke:0.15px #1e1e1e;">ART* = Anotação de Responsabilidade Técnica</div>
<svg class="i" style="left:320px;top:610px;" width="510" height="30" viewBox="0 0 510 30"><rect x="8.2" y="7.5" width="492.1" height="16.9" fill="none" stroke="#3567ad" stroke-width="1.7"/></svg>
<svg class="i" style="left:815px;top:629px;" width="12" height="12" viewBox="0 0 12 12"><circle cx="5.8" cy="5.9" r="4.2" fill="#fff"/><circle cx="5.8" cy="5.9" r="3.4" fill="#1c58d0"/></svg>
<div class="r" style="left:0px;top:809px;width:1600px;height:11.5px;background:#f8f9fa;"></div>
<div class="r" style="left:0px;top:809px;width:1600px;height:1px;background:#e3e3e3;"></div>
<div class="r" style="left:37.5px;top:809px;width:1.0px;height:11.5px;background:#e3e3e3;"></div>
<div class="r" style="left:40.3px;top:811.5px;width:794.7px;height:6.7999999999999545px;background:#dadce0;border-radius:4px;"></div>
<div class="r" style="left:1564.5px;top:810px;width:1.0px;height:10.5px;background:#e8e8e8;"></div>
<div class="r" style="left:1576.5px;top:810px;width:1.0px;height:10.5px;background:#e8e8e8;"></div>
<svg class="i" style="left:1569px;top:813px;" width="4" height="6" viewBox="0 0 4 6"><path d="M4 0L0 3L4 6Z" fill="#888"/></svg>
<svg class="i" style="left:1582px;top:813px;" width="4" height="6" viewBox="0 0 4 6"><path d="M0 0L4 3L0 6Z" fill="#888"/></svg>
<div class="r" style="left:1590px;top:782px;width:10px;height:1px;background:#e8e8e8;"></div>
<div class="r" style="left:1590px;top:796px;width:10px;height:1px;background:#e8e8e8;"></div>
<svg class="i" style="left:1592px;top:788px;" width="6" height="4" viewBox="0 0 6 4"><path d="M0 4L3 0L6 4Z" fill="#888"/></svg>
<svg class="i" style="left:1592px;top:802px;" width="6" height="4" viewBox="0 0 6 4"><path d="M0 0L3 4L6 0Z" fill="#888"/></svg>
<div class="r" style="left:0px;top:820.5px;width:1600px;height:29.5px;background:#f9fbfd;"></div>
<div class="r" style="left:0px;top:820px;width:1600px;height:1px;background:#e3e3e3;"></div>
<div class="r" style="left:48px;top:835.7px;width:8px;height:1.3999999999999773px;background:#444746;"></div>
<div class="r" style="left:51.3px;top:832.5px;width:1.4000000000000057px;height:8.0px;background:#444746;"></div>
<div class="r" style="left:79px;top:833.6px;width:12px;height:1.2999999999999545px;background:#444746;"></div>
<div class="r" style="left:79px;top:836.6px;width:12px;height:1.2999999999999545px;background:#444746;"></div>
<div class="r" style="left:79px;top:839.6px;width:12px;height:1.2999999999999545px;background:#444746;"></div>
<div class="r" style="left:510px;top:821px;width:65px;height:29px;background:#e1e9f7;"></div>
<div class="t" style="left:122.80px;top:830.12px;font-size:11.80px;color:#444746;transform:scaleX(0.9555);-webkit-text-stroke:0.15px #444746;">MENU</div>
<svg class="i" style="left:167.8px;top:835.5px;" width="7" height="4" viewBox="0 0 7 4"><path d="M0 0L3.5 4L7 0Z" fill="#444746"/></svg>
<div class="t" style="left:194.60px;top:830.12px;font-size:11.80px;color:#444746;transform:scaleX(0.9795);-webkit-text-stroke:0.15px #444746;">PRE_req</div>
<svg class="i" style="left:250px;top:835.5px;" width="7" height="4" viewBox="0 0 7 4"><path d="M0 0L3.5 4L7 0Z" fill="#444746"/></svg>
<div class="t" style="left:278.00px;top:830.12px;font-size:11.80px;color:#444746;transform:scaleX(1.0096);-webkit-text-stroke:0.15px #444746;">PRE_eqp</div>
<svg class="i" style="left:337.5px;top:835.5px;" width="7" height="4" viewBox="0 0 7 4"><path d="M0 0L3.5 4L7 0Z" fill="#444746"/></svg>
<div class="t" style="left:366.00px;top:830.12px;font-size:11.80px;color:#444746;transform:scaleX(1.0407);-webkit-text-stroke:0.15px #444746;">ID_amb</div>
<svg class="i" style="left:417.5px;top:835.5px;" width="7" height="4" viewBox="0 0 7 4"><path d="M0 0L3.5 4L7 0Z" fill="#444746"/></svg>
<div class="t" style="left:446.00px;top:830.12px;font-size:11.80px;color:#444746;transform:scaleX(1.0729);-webkit-text-stroke:0.15px #444746;">ID_pro</div>
<svg class="i" style="left:492.5px;top:835.5px;" width="7" height="4" viewBox="0 0 7 4"><path d="M0 0L3.5 4L7 0Z" fill="#444746"/></svg>
<div class="t" style="left:520.50px;top:830.12px;font-size:11.80px;color:#1a4fa8;transform:scaleX(1.0950);-webkit-text-stroke:0.4px #1a4fa8;">ID_rt</div>
<svg class="i" style="left:558px;top:835.5px;" width="7" height="4" viewBox="0 0 7 4"><path d="M0 0L3.5 4L7 0Z" fill="#1a4fa8"/></svg>
<div class="t" style="left:585.50px;top:830.12px;font-size:11.80px;color:#444746;transform:scaleX(1.0506);-webkit-text-stroke:0.15px #444746;">ID_cli</div>
<svg class="i" style="left:626px;top:835.5px;" width="7" height="4" viewBox="0 0 7 4"><path d="M0 0L3.5 4L7 0Z" fill="#444746"/></svg>
<div class="t" style="left:654.00px;top:830.12px;font-size:11.80px;color:#444746;transform:scaleX(0.9911);-webkit-text-stroke:0.15px #444746;">PMC_a</div>
<svg class="i" style="left:702px;top:835.5px;" width="7" height="4" viewBox="0 0 7 4"><path d="M0 0L3.5 4L7 0Z" fill="#444746"/></svg>
<div class="t" style="left:730.00px;top:830.12px;font-size:11.80px;color:#444746;transform:scaleX(1.0166);-webkit-text-stroke:0.15px #444746;">PMC_b</div>
<svg class="i" style="left:779.5px;top:835.5px;" width="7" height="4" viewBox="0 0 7 4"><path d="M0 0L3.5 4L7 0Z" fill="#444746"/></svg>
<div class="t" style="left:807.00px;top:830.12px;font-size:11.80px;color:#444746;transform:scaleX(1.0340);-webkit-text-stroke:0.15px #444746;">PMC_c</div>
<svg class="i" style="left:856px;top:835.5px;" width="7" height="4" viewBox="0 0 7 4"><path d="M0 0L3.5 4L7 0Z" fill="#444746"/></svg>
<div class="t" style="left:884.00px;top:830.12px;font-size:11.80px;color:#444746;transform:scaleX(1.0166);-webkit-text-stroke:0.15px #444746;">PMC_d</div>
<svg class="i" style="left:933px;top:835.5px;" width="7" height="4" viewBox="0 0 7 4"><path d="M0 0L3.5 4L7 0Z" fill="#444746"/></svg>
<div class="t" style="left:961.00px;top:830.12px;font-size:11.80px;color:#444746;transform:scaleX(1.0166);-webkit-text-stroke:0.15px #444746;">PMC_e</div>
<svg class="i" style="left:1010px;top:835.5px;" width="7" height="4" viewBox="0 0 7 4"><path d="M0 0L3.5 4L7 0Z" fill="#444746"/></svg>
<div class="t" style="left:1037.00px;top:830.12px;font-size:11.80px;color:#444746;transform:scaleX(1.0260);-webkit-text-stroke:0.15px #444746;">PMC_f</div>
<svg class="i" style="left:1083px;top:835.5px;" width="7" height="4" viewBox="0 0 7 4"><path d="M0 0L3.5 4L7 0Z" fill="#444746"/></svg>
<div class="t" style="left:1112.00px;top:830.12px;font-size:11.80px;color:#444746;transform:scaleX(0.9232);-webkit-text-stroke:0.15px #444746;">REC</div>
<svg class="i" style="left:1145px;top:835.5px;" width="7" height="4" viewBox="0 0 7 4"><path d="M0 0L3.5 4L7 0Z" fill="#444746"/></svg>
<div class="t" style="left:1172.00px;top:830.12px;font-size:11.80px;color:#444746;transform:scaleX(0.9584);-webkit-text-stroke:0.15px #444746;">REL</div>
<svg class="i" style="left:1203px;top:835.5px;" width="7" height="4" viewBox="0 0 7 4"><path d="M0 0L3.5 4L7 0Z" fill="#444746"/></svg>
<div class="t" style="left:1231.00px;top:830.12px;font-size:11.80px;color:#444746;transform:scaleX(0.9633);-webkit-text-stroke:0.15px #444746;">DSH</div>
<svg class="i" style="left:1263px;top:835.5px;" width="7" height="4" viewBox="0 0 7 4"><path d="M0 0L3.5 4L7 0Z" fill="#444746"/></svg>
<div class="t" style="left:1292.00px;top:830.12px;font-size:11.80px;color:#444746;transform:scaleX(1.0611);-webkit-text-stroke:0.15px #444746;">INI</div>
<svg class="i" style="left:1316px;top:835.5px;" width="7" height="4" viewBox="0 0 7 4"><path d="M0 0L3.5 4L7 0Z" fill="#444746"/></svg>
<div class="t" style="left:1345.00px;top:830.12px;font-size:11.80px;color:#444746;transform:scaleX(0.9777);-webkit-text-stroke:0.15px #444746;">SUG</div>
<svg class="i" style="left:1379px;top:835.5px;" width="7" height="4" viewBox="0 0 7 4"><path d="M0 0L3.5 4L7 0Z" fill="#444746"/></svg>
<div class="r" style="left:112.5px;top:848px;width:70.30000000000001px;height:2px;background:#34a04a;border-radius:2px 2px 0 0;"></div>
<svg class="i" style="left:1573px;top:834px;" width="7" height="8" viewBox="0 0 7 8"><path d="M6 0.5L1.5 4L6 7.5" fill="none" stroke="#444746" stroke-width="1.5"/></svg>
</body></html>
